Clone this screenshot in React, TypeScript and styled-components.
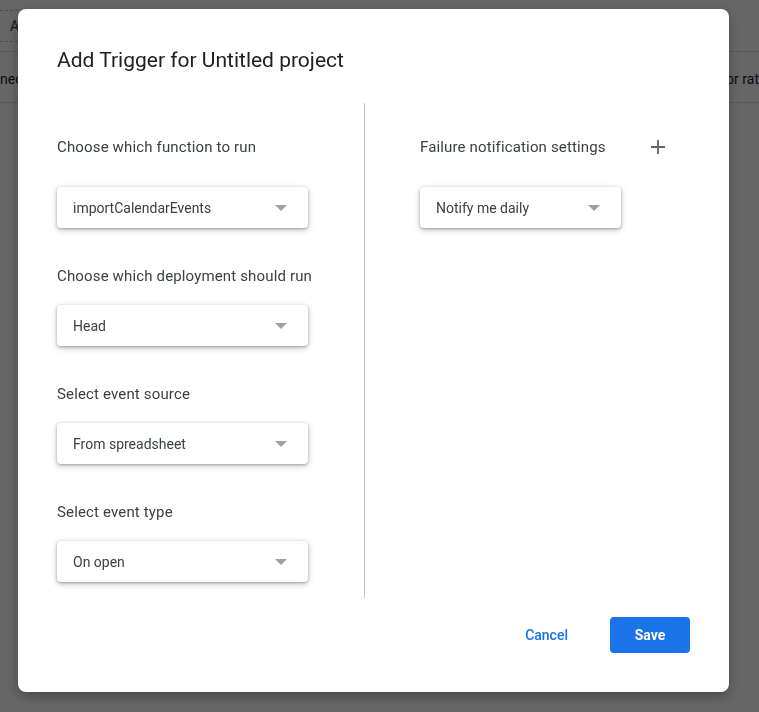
import styled, { createGlobalStyle } from "styled-components";

const GlobalStyle = createGlobalStyle`
  html, body {
    margin: 0;
    padding: 0;
    background: #ffffff;
    font-family: Roboto, "Liberation Sans", Arial, sans-serif;
    overflow: hidden;
  }
`;

const Page = styled.div`
  width: 759px;
  height: 712px;
  background: #ffffff;
  display: flex;
  flex-direction: column;
`;

const PageHeader = styled.div`
  height: 52px;
  box-sizing: border-box;
  border-bottom: 1px solid #dadce0;
  padding: 10px 0 0 0;
`;

const SearchBox = styled.div`
  width: 200px;
  height: 32px;
  box-sizing: border-box;
  border-top: 1px dashed #bdbdbd;
  border-bottom: 1px dashed #bdbdbd;
  padding-left: 10px;
  display: flex;
  align-items: center;
  font-size: 14px;
  color: #3c4043;
`;

const TableHead = styled.div`
  height: 51px;
  box-sizing: border-box;
  border-bottom: 1px solid #dadce0;
  display: flex;
  align-items: center;
  justify-content: space-between;
  font-size: 14px;
  color: #202124;
  padding-top: 4px;
`;

const HeadCell = styled.span`
  white-space: nowrap;
`;

const Overlay = styled.div`
  position: fixed;
  inset: 0;
  background: rgba(0, 0, 0, 0.6);
  display: flex;
  align-items: flex-start;
  padding: 9px 0 0 18px;
`;

const Dialog = styled.div`
  width: 711px;
  height: 683px;
  box-sizing: border-box;
  background: #ffffff;
  border-radius: 8px;
  box-shadow: 0 4px 12px rgba(0, 0, 0, 0.3);
  padding: 37px 39px 39px 39px;
  display: flex;
  flex-direction: column;
`;

const Title = styled.h2`
  margin: 0;
  font-size: 21px;
  font-weight: 400;
  line-height: 28px;
  color: #202124;
`;

const Body = styled.div`
  flex: 1;
  display: grid;
  grid-template-columns: 307px 1px 1fr;
  margin-top: 29px;
`;

const Column = styled.div<{ $right?: boolean }>`
  display: flex;
  flex-direction: column;
  gap: 38px;
  padding: 34px 0 0 ${(p) => (p.$right ? "55px" : "0")};
`;

const Divider = styled.div`
  background: #c4c4c4;
  height: 495px;
`;

const Field = styled.div<{ $first?: boolean }>`
  display: flex;
  flex-direction: column;
  gap: ${(p) => (p.$first ? "30px" : "19px")};
`;

const LabelRow = styled.div`
  display: flex;
  align-items: center;
  height: 20px;
`;

const Label = styled.div`
  font-size: 15px;
  line-height: 20px;
  letter-spacing: 0.15px;
  color: #3c4043;
`;

const AddButton = styled.button`
  margin-left: auto;
  margin-right: 24px;
  background: none;
  border: none;
  padding: 0;
  width: 16px;
  height: 16px;
  display: flex;
  align-items: center;
  justify-content: center;
  cursor: pointer;
`;

const Select = styled.div<{ $width: number }>`
  width: ${(p) => p.$width}px;
  height: 41px;
  box-sizing: border-box;
  border-radius: 4px;
  background: #ffffff;
  box-shadow: 0 1px 3px rgba(0, 0, 0, 0.28), 0 2px 7px rgba(0, 0, 0, 0.2);
  display: flex;
  align-items: center;
  padding: 0 21px 0 16px;
  font-size: 14px;
  color: #3c4043;
`;

const SelectText = styled.span`
  flex: 1;
`;

const Caret = styled.span`
  width: 0;
  height: 0;
  border-left: 6px solid transparent;
  border-right: 6px solid transparent;
  border-top: 6px solid #a0a0a0;
`;

const Footer = styled.div`
  display: flex;
  justify-content: flex-end;
  align-items: center;
  gap: 42px;
`;

const TextButton = styled.button`
  background: none;
  border: none;
  padding: 0;
  font-family: Roboto, "Liberation Sans", Arial, sans-serif;
  font-size: 14px;
  font-weight: 500;
  color: #1a73e8;
  cursor: pointer;
`;

const PrimaryButton = styled.button`
  width: 80px;
  height: 36px;
  border: none;
  border-radius: 4px;
  background: #1a73e8;
  color: #ffffff;
  font-family: Roboto, "Liberation Sans", Arial, sans-serif;
  font-size: 14px;
  font-weight: 700;
  cursor: pointer;
`;

const leftFields = [
  { label: "Choose which function to run", value: "importCalendarEvents" },
  { label: "Choose which deployment should run", value: "Head" },
  { label: "Select event source", value: "From spreadsheet" },
  { label: "Select event type", value: "On open" },
];

const App = () => {
  return (
    <>
      <GlobalStyle />
      <Page>
        <PageHeader>
          <SearchBox>A</SearchBox>
        </PageHeader>
        <TableHead>
          <HeadCell>nec</HeadCell>
          <HeadCell>Error rat</HeadCell>
        </TableHead>
      </Page>
      <Overlay>
        <Dialog>
          <Title>Add Trigger for Untitled project</Title>
          <Body>
            <Column>
              {leftFields.map((f, i) => (
                <Field key={f.label} $first={i === 0}>
                  <LabelRow>
                    <Label>{f.label}</Label>
                  </LabelRow>
                  <Select $width={251}>
                    <SelectText>{f.value}</SelectText>
                    <Caret />
                  </Select>
                </Field>
              ))}
            </Column>
            <Divider />
            <Column $right>
              <Field $first>
                <LabelRow>
                  <Label>Failure notification settings</Label>
                  <AddButton aria-label="Add">
                    <svg width="16" height="16" viewBox="0 0 16 16">
                      <path d="M8 1v14M1 8h14" stroke="#5f6368" strokeWidth="1.8" />
                    </svg>
                  </AddButton>
                </LabelRow>
                <Select $width={201}>
                  <SelectText>Notify me daily</SelectText>
                  <Caret />
                </Select>
              </Field>
            </Column>
          </Body>
          <Footer>
            <TextButton>Cancel</TextButton>
            <PrimaryButton>Save</PrimaryButton>
          </Footer>
        </Dialog>
      </Overlay>
    </>
  );
};

export default App;
